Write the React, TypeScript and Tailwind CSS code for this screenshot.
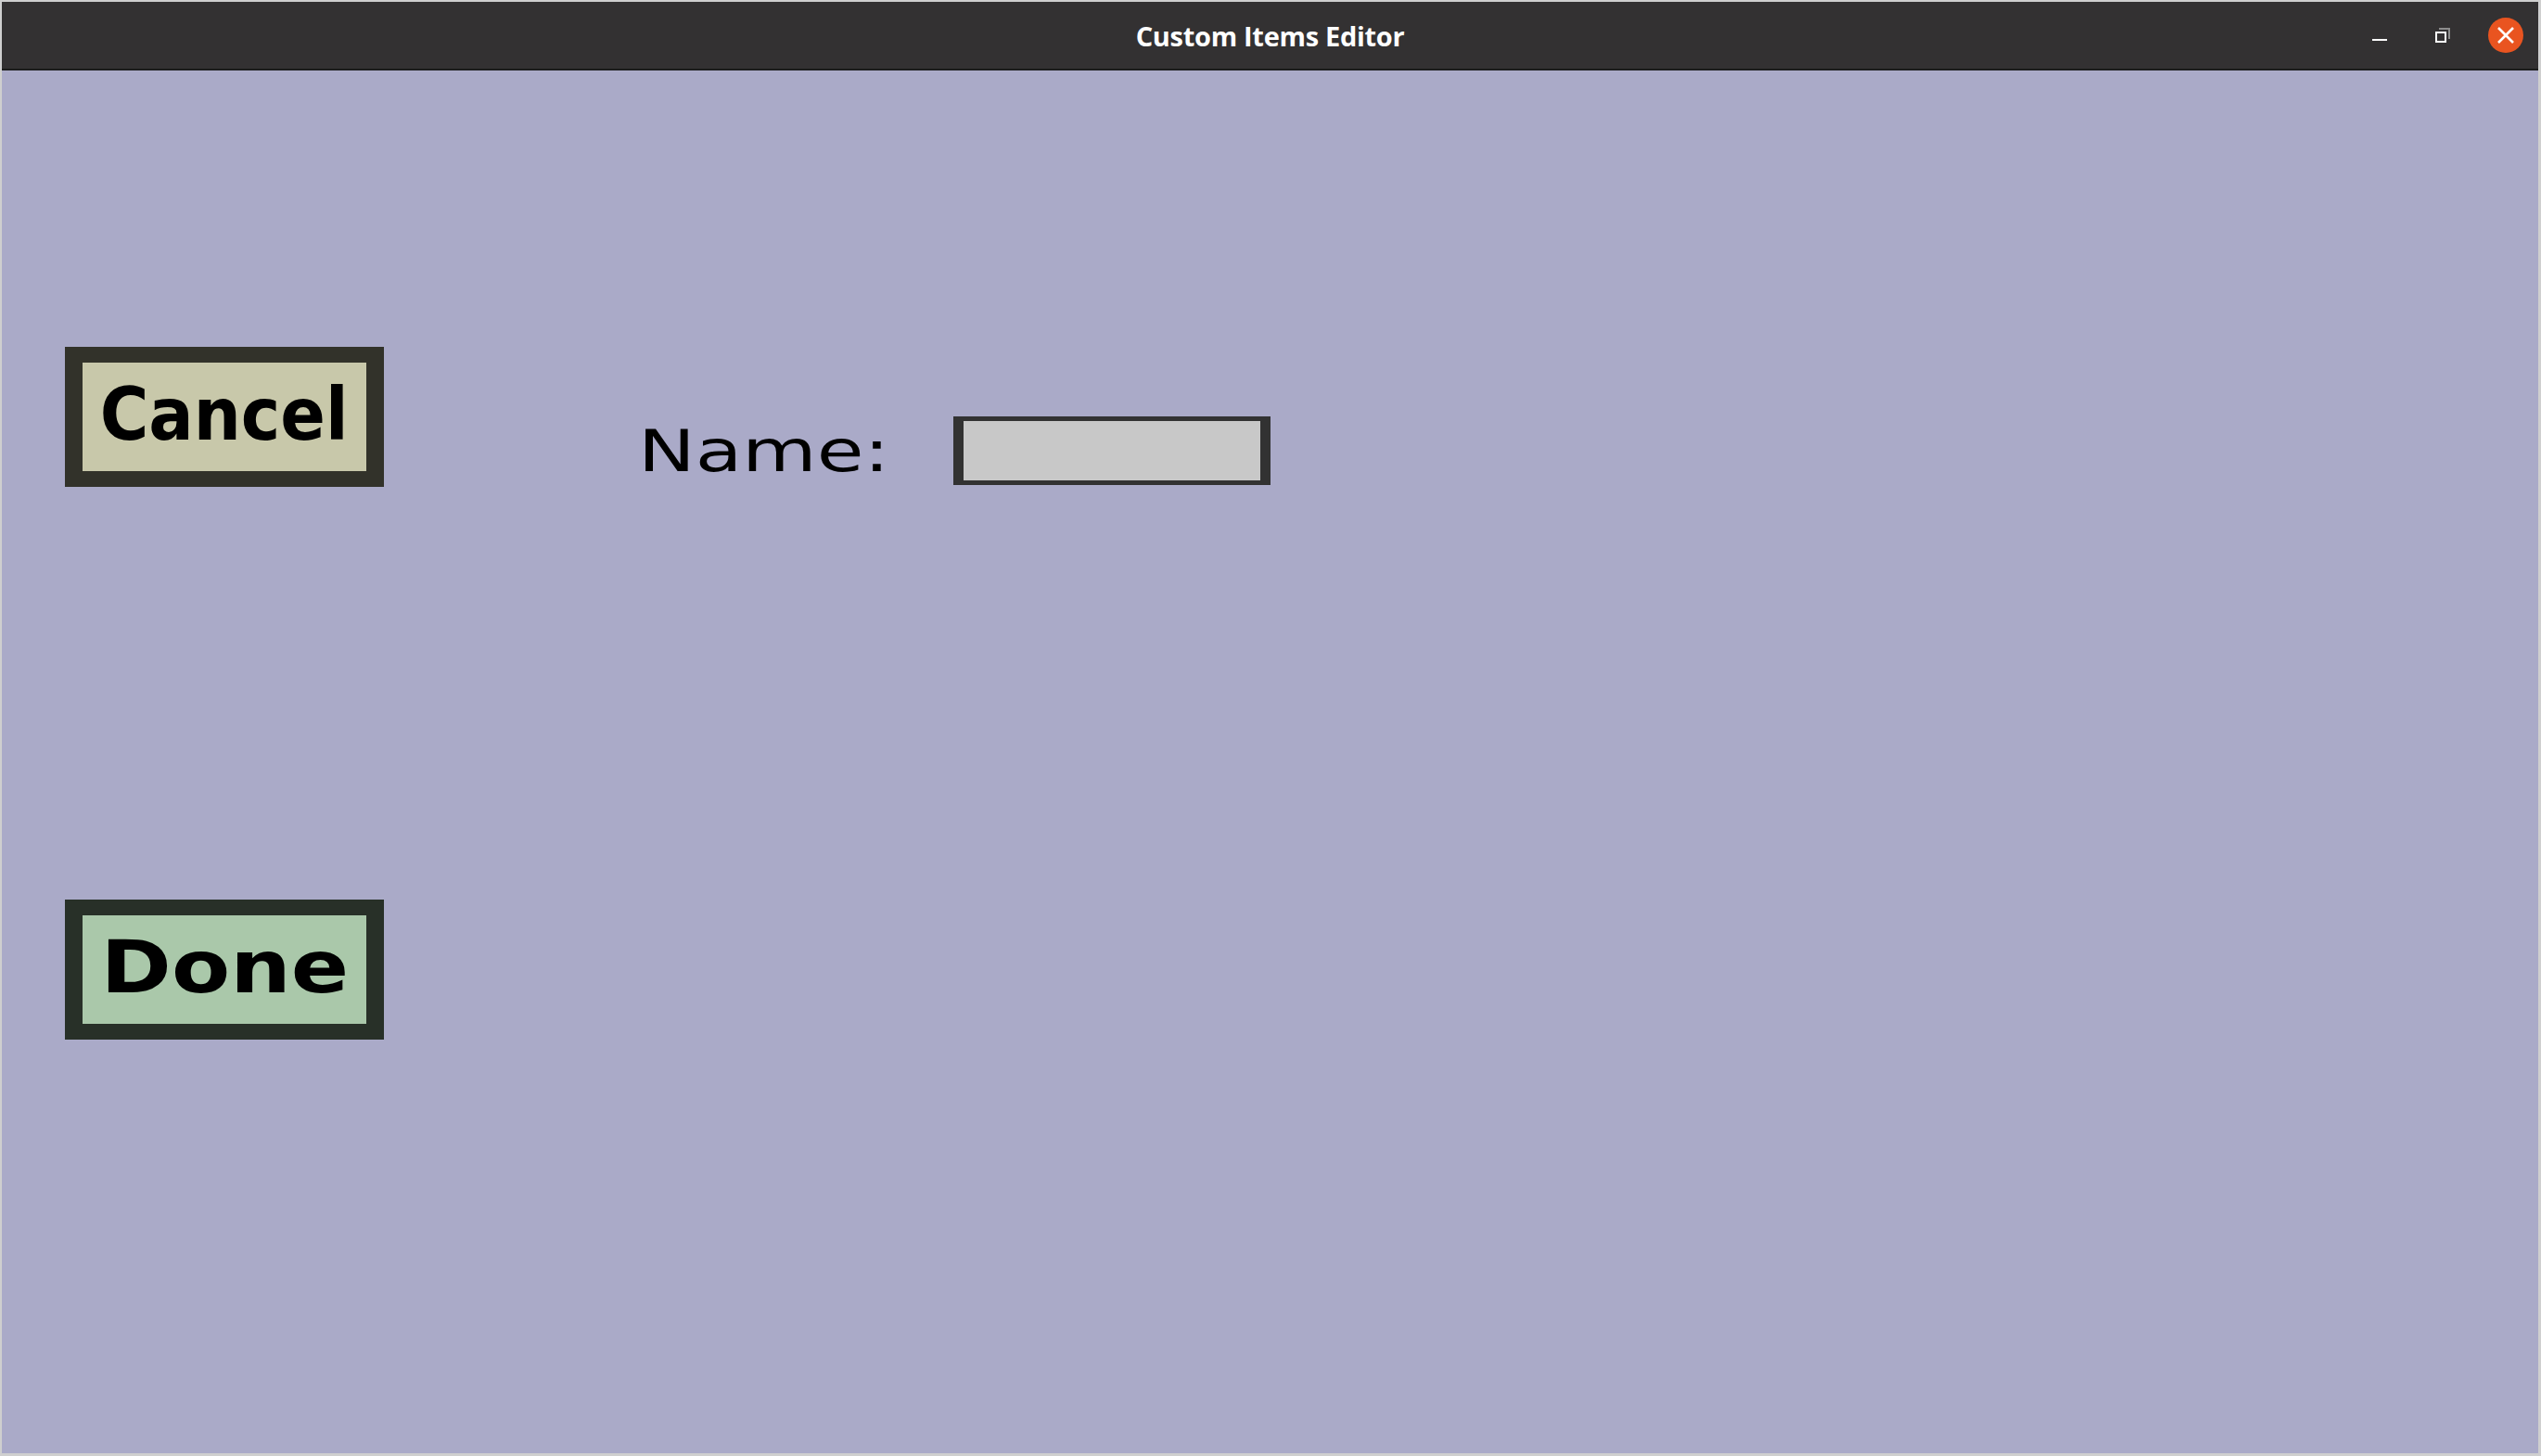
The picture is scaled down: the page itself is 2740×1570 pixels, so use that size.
import React from "react"

const dejavu = { fontFamily: "'DejaVu Sans', 'Liberation Sans', sans-serif" }

function TitleBar() {
  return (
    <div className="grid h-[72px] grid-cols-[1fr_auto_1fr] items-center bg-[#333132]">
      <div />
      <span
        className="text-[29px] font-bold leading-none tracking-[-0.3px] text-white"
        style={{ fontFamily: "'Open Sans', 'DejaVu Sans', sans-serif" }}
      >
        Custom Items Editor
      </span>
      <div className="flex items-center justify-end pr-[16px]">
        {/* minimize */}
        <svg width="16" height="38" viewBox="0 0 16 38">
          <rect x="0" y="23" width="16" height="2" fill="#ffffff" />
        </svg>
        {/* restore */}
        <svg width="16" height="38" viewBox="0 0 16 38" className="ml-[52px]">
          <rect x="4" y="11" width="12" height="2" fill="#8c8c8c" />
          <rect x="14" y="11" width="2" height="12" fill="#8c8c8c" />
          <rect x="1" y="16" width="10" height="10" fill="none" stroke="#ffffff" strokeWidth="2" />
        </svg>
        {/* close */}
        <div className="ml-[41px] flex h-[38px] w-[38px] items-center justify-center rounded-full bg-[#e95420]">
          <svg width="38" height="38" viewBox="0 0 38 38">
            <path d="M11 11 L27 27 M27 11 L11 27" stroke="#ffffff" strokeWidth="2.6" />
          </svg>
        </div>
      </div>
    </div>
  )
}

function BigButton({ label, fill, border, scale }: { label: string; fill: string; border: string; scale: string }) {
  return (
    <div className={`flex h-[151px] w-[344px] items-center justify-center border-x-[19px] border-y-[17px] ${fill} ${border}`}>
      <span
        className={`inline-block -translate-y-[3px] text-[78px] font-bold leading-none text-black ${scale}`}
        style={dejavu}
      >
        {label}
      </span>
    </div>
  )
}

export default function App() {
  return (
    <div className="h-[1570px] w-[2740px] bg-[#cfcfcf] pb-[3px] pl-[2px] pr-[3px] pt-[2px]">
      <div className="flex h-full flex-col">
        <TitleBar />
        <div className="h-[2px] bg-[#1c1c1c]" />
        <div className="flex flex-1 items-start bg-[#aaaac8]">
          <div className="ml-[68px] mt-[298px] flex flex-col gap-[445px]">
            <BigButton label="Cancel" fill="bg-[#c8c8aa]" border="border-[#32322a]" scale="scale-x-[0.92]" />
            <BigButton label="Done" fill="bg-[#aac8aa]" border="border-[#283028]" scale="scale-x-[1.18]" />
          </div>
          <div className="ml-[274px] mt-[373px] flex items-center">
            <div className="w-[340px]">
              <span
                className="inline-block origin-left scale-x-[1.31] text-[63px] leading-none text-black"
                style={dejavu}
              >
                Name:
              </span>
            </div>
            <div className="h-[74px] w-[342px] border-x-[11px] border-y-[5px] border-[#323232] bg-[#c8c8c8]" />
          </div>
        </div>
      </div>
    </div>
  )
}
